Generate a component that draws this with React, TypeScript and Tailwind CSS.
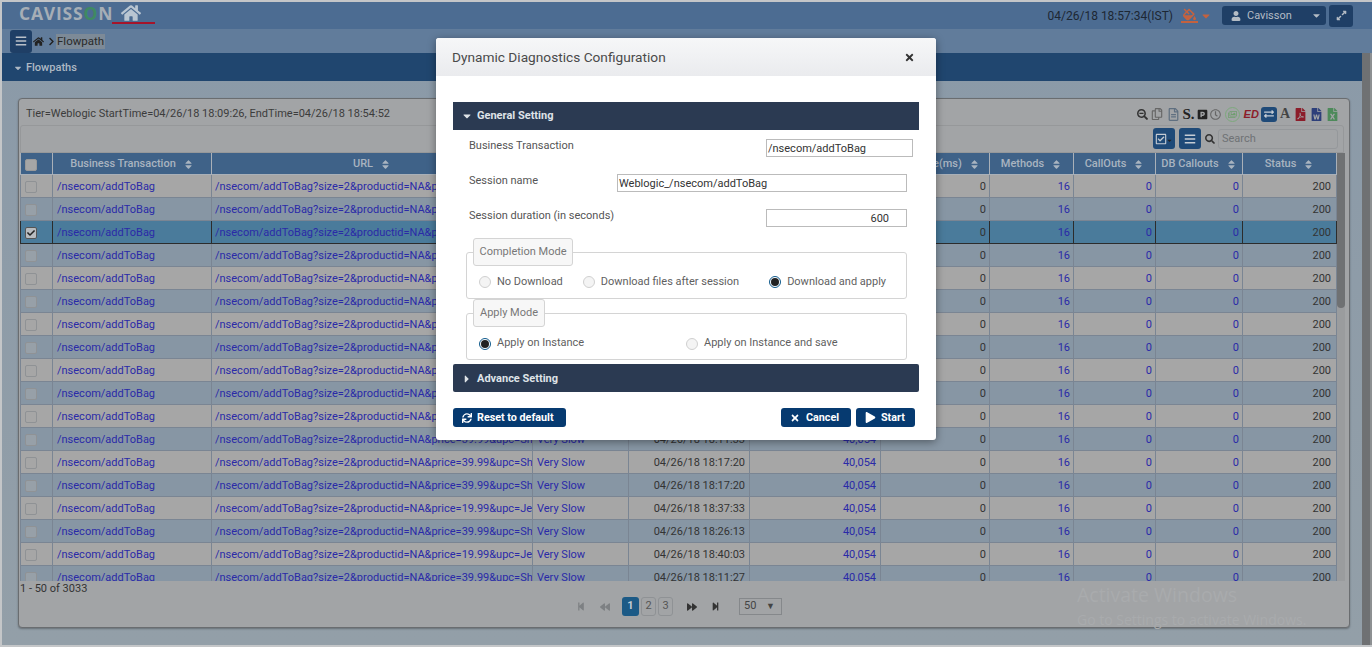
import React from "react";
import {
  FaHome, FaBars, FaChevronRight, FaUser, FaExpandAlt, FaCaretDown, FaCaretRight, FaSort, FaRegCheckSquare,
  FaSearch, FaSync, FaTimes, FaPlay, FaStepBackward, FaBackward, FaForward, FaStepForward, FaExchangeAlt,
  FaSearchMinus, FaFillDrip, FaCheck, FaRegCopy, FaRegFileAlt, FaFilePdf, FaFileWord, FaFileExcel, FaParking, FaRegClock, FaRegImages,
} from "react-icons/fa";

const S39 = "/nsecom/addToBag?size=2&productid=NA&price=39.99&upc=Sh";
const S19 = "/nsecom/addToBag?size=2&productid=NA&price=19.99&upc=Je";
const times = ["18:11:33","18:11:33","18:11:33","18:11:33","18:11:33","18:11:33","18:11:33","18:11:33","18:11:33","18:11:33","18:11:33","18:11:33","18:17:20","18:17:20","18:37:33","18:26:13","18:40:03","18:11:27"];
const rows = times.map((t, i) => ({ t, url: i === 14 || i === 16 ? S19 : S39 }));
const cols = [32, 159, 321, 96, 121, 131, 109, 84, 82, 87, 94];
const heads = ["", "Business Transaction", "URL", "Category", "Start Time", "Instance", "CPU Time(ms)", "Methods", "CallOuts", "DB Callouts", "Status"];
const font = "font-['Roboto','Liberation_Sans',sans-serif]";
const td = "border h-[23px] pb-0 pt-[2px] px-0 overflow-hidden whitespace-nowrap";
const link = "text-[#2a2aa8]";

function Radio({ on }: { on?: boolean }) {
  return on ? (
    <span className="w-3 h-3 rounded-full border border-[#0f5a8c] bg-white flex items-center justify-center shrink-0">
      <span className="w-[8px] h-[8px] rounded-full bg-[#222]" />
    </span>
  ) : (
    <span className="w-3 h-3 rounded-full border border-[#d0d0d0] bg-[#f4f4f4] shrink-0" />
  );
}

function Legend({ w, children }: { w: string; children: React.ReactNode }) {
  return (
    <div className={`${w} relative z-10 ml-[7px] h-[28px] -mb-[14px] border border-[#d4d4d4] rounded-[3px] bg-[#f7f7f7] text-[#777] flex items-center justify-center text-[11px]`}>
      {children}
    </div>
  );
}

function PdfIcons() {
  return (
    <div className="flex items-center h-[26px] justify-end pr-[10px] text-[#4a4f55]">
      <FaSearchMinus className="text-[11px] mr-[3px] text-[#333]" />
      <FaRegCopy className="text-[12px] mr-[4px] text-[#666]" />
      <FaRegFileAlt className="text-[13px] mr-[3px] text-[#5f6f80]" />
      <span className="font-['Liberation_Serif',serif] font-bold text-[15px] leading-none text-[#222] mr-[2px]">S.</span>
      <FaParking className="text-[11px] mr-[2px] text-[#222]" />
      <FaRegClock className="text-[11px] mr-[4px] text-[#666]" />
      <span className="w-[15px] h-[15px] rounded-full border border-[#7da97d] flex items-center justify-center mr-[4px]"><FaRegImages className="text-[9px] text-[#6f9d6f]" /></span>
      <span className="font-['Liberation_Sans',sans-serif] font-bold italic text-[11px] text-[#8c1d2a] mr-[2px] leading-none">ED</span>
      <span className="w-[16px] h-[15px] rounded-[3px] bg-[#1f4a78] flex items-center justify-center mr-[1px]"><FaExchangeAlt className="text-[10px] text-[#c5ccd4]" /></span>
      <span className="font-['Liberation_Serif',serif] font-bold text-[14px] leading-none text-[#444] ml-[2px] mr-[4px]">A</span>
      <FaFilePdf className="text-[13px] mr-[3px] text-[#8c1d2a]" />
      <FaFileWord className="text-[13px] mr-[3px] text-[#2d3f7a]" />
      <FaFileExcel className="text-[13px] text-[#4d8a5a]" />
    </div>
  );
}

function Table() {
  return (
    <div className="flex h-[429px] overflow-hidden pl-px">
      <table className="table-fixed border-collapse w-[1316px] text-[11px] self-start">
        <colgroup>{cols.map((w, i) => <col key={i} style={{ width: w }} />)}</colgroup>
        <thead>
          <tr className="bg-[#3f6288] text-[#a9b4c0]">
            {heads.map((h, i) => (
              <th key={i} className="border border-[#a9b0b8] border-t-0 h-[22px] px-0 pb-0 pt-[2px] font-medium overflow-hidden whitespace-nowrap">
                {i === 0 ? (
                  <span className="block w-3 h-3 rounded-[2px] bg-[#a6a6a6] border border-[#999] ml-[4px]" />
                ) : (
                  <span className="inline-flex items-center gap-[7px]">{h}<FaSort className="text-[11px]" /></span>
                )}
              </th>
            ))}
          </tr>
        </thead>
        <tbody>
          {rows.map((r, i) => {
            const sel = i === 2;
            const bg = sel ? "bg-[#4a7b9b]" : i % 2 === 0 ? "bg-[#a6a6a6]" : "bg-[#8796a4]";
            const b = sel ? "border-[#2c2c2c]" : "border-[#7a8593]";
            return (
              <tr key={i} className={`${bg} text-[#333]`}>
                <td className={`${td} ${b}`}>
                  {sel ? (
                    <span className="w-3 h-3 rounded-[2px] bg-[#b8bcc0] border border-[#555] ml-[4px] flex items-center justify-center"><FaCheck className="text-[8px] text-[#222]" /></span>
                  ) : (
                    <span className={`block w-3 h-3 rounded-[2px] border border-[#8f9295] ml-[4px] ${i % 2 === 0 ? "bg-[#a6a6a6]" : "bg-[#97a0a8]"}`} />
                  )}
                </td>
                <td className={`${td} ${b} pl-[4px] ${link}`}>/nsecom/addToBag</td>
                <td className={`${td} ${b} pl-[3px] ${link}`}>{r.url}</td>
                <td className={`${td} ${b} pl-[4px] ${link}`}>Very Slow</td>
                <td className={`${td} ${b} text-right pr-[4px]`}>04/26/18 {r.t}</td>
                <td className={`${td} ${b} text-right pr-[4px] ${link}`}>40,054</td>
                <td className={`${td} ${b} text-right pr-[3px]`}>0</td>
                <td className={`${td} ${b} text-right pr-[3px] ${link}`}>16</td>
                <td className={`${td} ${b} text-right pr-[3px] ${link}`}>0</td>
                <td className={`${td} ${b} text-right pr-[3px] ${link}`}>0</td>
                <td className={`${td} ${b} text-right pr-[5px]`}>200</td>
              </tr>
            );
          })}
        </tbody>
      </table>
      <div className="w-[8px] h-full bg-[#9a9c9e]">
        <div className="h-[155px] rounded-b-[4px] bg-[#6f7173]" />
      </div>
    </div>
  );
}

function Pager() {
  return (
    <div className="relative h-[46px]">
      <div className="text-[11px] text-[#333] pl-[1px] pt-[2px] h-[12px] leading-[12px]">1 - 50 of 3033</div>
      <div className="flex items-center mt-[4px] ml-[558px] h-[19px] text-[#6f7275]">
        <FaStepBackward className="text-[9px] text-[#7d8083] w-[8px]" />
        <FaBackward className="text-[10px] text-[#7d8083] ml-[15px]" />
        <span className="ml-[12px] w-[17px] h-[19px] rounded-[3px] bg-[#1c5a86] text-[#c3ccd4] text-[11px] font-bold flex items-center justify-center">1</span>
        <span className="ml-[2px] w-[15px] h-[19px] rounded-[3px] border border-[#8f9295] text-[#555] text-[11px] flex items-center justify-center">2</span>
        <span className="ml-[2px] w-[15px] h-[19px] rounded-[3px] border border-[#8f9295] text-[#555] text-[11px] flex items-center justify-center">3</span>
        <FaForward className="text-[10px] text-[#333] ml-[14px]" />
        <FaStepForward className="text-[9px] text-[#333] ml-[14px]" />
        <div className="ml-[19px] w-[43px] h-[17px] border border-[#85888b] text-[#444] text-[11px] flex items-center justify-between pl-[4px] pr-[6px]">
          50<span className="text-[9px] leading-none">▼</span>
        </div>
      </div>
    </div>
  );
}

function Modal() {
  return (
    <div className="absolute left-[436px] top-[38px] w-[500px] h-[402px] bg-white rounded-[3px] shadow-[0_2px_8px_rgba(0,0,0,0.4)] text-[#555] flex flex-col">
      <div className="h-[38px] shrink-0 rounded-t-[3px] bg-gradient-to-b from-[#f6f7f8] to-[#eaebee] flex items-center justify-between pl-[16px] pr-[21px] pt-px">
        <span className="text-[13.7px] text-[#4a4a4a]">Dynamic Diagnostics Configuration</span>
        <FaTimes className="text-[11px] text-[#333]" />
      </div>
      <div className="px-[17px] pt-[26px] flex flex-col">
        <div className="h-[28px] bg-[#2b3a52] flex items-center pl-[8px] text-[#dfe3e8] text-[11px] font-bold">
          <FaCaretDown className="text-[12px] mr-[4px]" />General Setting
        </div>
        <div className="flex items-start mt-[9px] h-[18px] text-[11px]">
          <span className="ml-[16px] pt-px leading-[12px]">Business Transaction</span>
          <span className="ml-auto mr-[6px] w-[147px] h-[18px] border border-[#bbb] text-[#333] flex items-center pl-px pt-[2px]">/nsecom/addToBag</span>
        </div>
        <div className="flex items-start mt-[17px] h-[18px] text-[11px]">
          <span className="ml-[16px] pt-px leading-[12px]">Session name</span>
          <span className="ml-auto mr-[12px] w-[290px] h-[18px] border border-[#bbb] text-[#333] flex items-center pl-px pt-[2px]">Weblogic_/nsecom/addToBag</span>
        </div>
        <div className="flex items-start mt-[17px] h-[18px] text-[11px]">
          <span className="ml-[16px] pt-px leading-[12px]">Session duration (in seconds)</span>
          <span className="ml-auto mr-[12px] w-[141px] h-[18px] border border-[#bbb] text-[#333] flex items-center justify-end pr-[17px] pt-[2px]">600</span>
        </div>

        <div className="mt-[11px] ml-[13px] w-[441px] flex flex-col">
          <Legend w="w-[100px]">Completion Mode</Legend>
          <div className="h-[47px] border border-[#d4d4d4] rounded-[3px] flex items-center pt-[13px] pl-[12px] text-[11px] text-[#5f5f5f] whitespace-nowrap">
            <span className="flex items-center gap-[6px]"><Radio />No Download</span>
            <span className="flex items-center gap-[6px] ml-[20px]"><Radio />Download files after session</span>
            <span className="flex items-center gap-[6px] ml-[30px]"><Radio on />Download and apply</span>
          </div>
          <Legend w="w-[72px]">Apply Mode</Legend>
          <div className="h-[47px] border border-[#d4d4d4] rounded-[3px] flex items-center pt-[14px] pl-[12px] text-[11px] text-[#5f5f5f] whitespace-nowrap">
            <span className="flex items-center gap-[6px] w-[207px]"><Radio on />Apply on Instance</span>
            <span className="flex items-center gap-[6px]"><Radio />Apply on Instance and save</span>
          </div>
        </div>

        <div className="mt-[4px] h-[28px] rounded-[2px] bg-[#2b3a52] flex items-center pl-[8px] pt-[2px] text-[#dfe3e8] text-[11px] font-bold">
          <FaCaretRight className="text-[12px] mr-[4px]" />Advance Setting
        </div>
        <div className="mt-[16px] flex items-center text-white text-[10.75px] font-bold">
          <span className="w-[113px] h-[19px] rounded-[3px] bg-[#063a70] flex items-center pl-[9px] gap-[5px]"><FaSync className="text-[10px]" /><span className="pt-px">Reset to default</span></span>
          <span className="ml-auto w-[70px] h-[19px] rounded-[3px] bg-[#063a70] flex items-center pl-[9px] gap-[6px]"><FaTimes className="text-[10px]" /><span className="pt-px">Cancel</span></span>
          <span className="ml-[5px] mr-[4px] w-[59px] h-[19px] rounded-[3px] bg-[#063a70] flex items-center pl-[9px] gap-[5px]"><FaPlay className="text-[11px]" /><span className="pt-px">Start</span></span>
        </div>
      </div>
    </div>
  );
}

export default function App() {
  return (
    <div className={`${font} relative w-[1372px] h-[647px] overflow-hidden bg-[#c4c6c8] pl-[2px] pt-[2px] pb-[2px] flex flex-col`}>
      <div className="h-[27px] shrink-0 bg-[#4c6c92] flex items-center relative">
        <span className="ml-[17px] -mt-[3px] font-['Open_Sans',sans-serif] font-bold text-[17.5px] tracking-[0.8px] text-[#a6aeb6] leading-none flex items-center">
          CAVISS<span className="text-[#3f8a62]">O</span>N
        </span>
        <FaHome className="ml-[8px] -mt-[6px] text-[20px] text-[#b9c6d2]" />
        <span className="absolute left-[110px] top-[20px] w-[43px] h-[2px] bg-[#a5142a]" />
        <span className="ml-auto text-[12px] text-[#1d2733]">04/26/18 18:57:34(IST)</span>
        <div className="ml-[8px] flex flex-col items-center w-[17px] text-[#c4623f]">
          <FaFillDrip className="text-[13px]" />
          <span className="block w-[17px] h-[2px] bg-[#c4623f]" />
        </div>
        <FaCaretDown className="ml-[2px] text-[12px] text-[#c4623f]" />
        <div className="ml-[10px] w-[104px] h-[19px] rounded-[3px] bg-[#1f3f66] text-[#b4bcc5] text-[11px] flex items-center pl-[9px]">
          <FaUser className="text-[10px] mr-[6px]" /><span className="pt-px">Cavisson</span><FaCaretDown className="ml-auto mr-[4px] text-[11px]" />
        </div>
        <div className="ml-[3px] mr-[19px] w-[24px] h-[22px] rounded-[3px] bg-[#1f3f66] flex items-center justify-center text-[#b4bcc5]">
          <FaExpandAlt className="text-[11px]" />
        </div>
      </div>
      <div className="h-[24px] shrink-0 bg-[#617c9b] flex items-center">
        <div className="ml-[8px] w-[22px] h-[23px] rounded-[3px] bg-[#1f3f66] flex items-center justify-center text-[#b9c0c8]"><FaBars className="text-[12px]" /></div>
        <FaHome className="ml-[1px] text-[11px] text-[#222]" />
        <FaChevronRight className="ml-[3px] text-[9px] text-[#222]" />
        <span className="px-[1px] bg-[#7d8a97] text-[11.5px] text-[#2a2a2a] leading-[15px]">Flowpath</span>
      </div>
      <div className="flex flex-1 min-h-0">
        <div className="flex-1 flex flex-col bg-gradient-to-b from-[#8b9aa8] to-[#939fa8]">
          <div className="h-[28px] shrink-0 bg-[#20466f] flex items-center pl-[11px] pt-[2px] text-[#aeb9c4] text-[11px] font-medium">
            <FaCaretDown className="text-[10px] mr-[3px]" />Flowpaths
          </div>
          <div className="mt-[17px] ml-[16px] w-[1332px] h-[530px] rounded-[4px] bg-[#a2a4a6] border border-[#6a6d70] shadow-[0_1px_2px_rgba(0,0,0,0.3)] flex flex-col">
            <div className="h-[26px] flex items-center pt-[4px]">
              <span className="ml-[7px] text-[11px] text-[#3c3c3c] whitespace-nowrap">Tier=Weblogic StartTime=04/26/18 18:09:26, EndTime=04/26/18 18:54:52</span>
              <div className="ml-auto"><PdfIcons /></div>
            </div>
            <div className="ml-px mr-[5px] h-[28px] border border-[#96989a] rounded-t-[3px] flex items-center justify-end pr-[5px]">
              <span className="w-[22px] h-[21px] rounded-[3px] bg-[#1f4a78] flex items-center justify-center text-[#c5ccd4]"><FaRegCheckSquare className="text-[12px]" /><FaCaretDown className="text-[7px] -ml-px mt-[3px] text-[#222]" /></span>
              <span className="ml-[4px] w-[22px] h-[21px] rounded-[3px] bg-[#1f4a78] flex items-center justify-center text-[#c5ccd4]"><FaBars className="text-[12px]" /></span>
              <FaSearch className="ml-[4px] text-[10px] text-[#333]" />
              <span className="ml-[3px] w-[120px] h-[20px] rounded-[3px] border border-[#95989b] text-[11px] text-[#6f7275] flex items-center pl-[3px]">Search</span>
            </div>
            <Table />
            <Pager />
          </div>
        </div>
        <div className="w-[10px] shrink-0 flex">
          <div className="w-[8px] bg-[#6f7173]" />
          <div className="w-[2px] bg-[#8d9092]" />
        </div>
      </div>
      <div className="absolute left-[1077px] top-[585px] text-[#a9abad] font-['Open_Sans',sans-serif] leading-none pointer-events-none">
        <div className="text-[19.5px]">Activate Windows</div>
        <div className="text-[14px] mt-[8px]">Go to Settings to activate Windows.</div>
      </div>
      <Modal />
    </div>
  );
}
